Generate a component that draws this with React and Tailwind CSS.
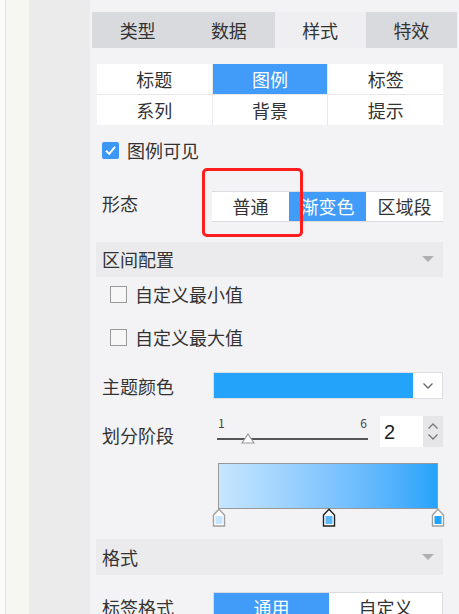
import React from 'react';

const font = { fontFamily: '"Noto Sans CJK SC", "Noto Sans", sans-serif' };

const Checkbox = ({ checked }) =>
  checked ? (
    <span className="flex h-[17px] w-[17px] items-center justify-center rounded-[2px] bg-[#3d97f5]">
      <svg width="13" height="13" viewBox="0 0 13 13">
        <path d="M2 6.8 L5.2 9.8 L11 2.8" fill="none" stroke="#fff" strokeWidth="2" />
      </svg>
    </span>
  ) : (
    <span className="h-[17px] w-[17px] border border-[#9a9a9a] bg-[#f7f7f7]" />
  );

const Caret = () => (
  <svg width="12" height="7" viewBox="0 0 12 7">
    <path d="M0 0 H12 L6 6 Z" fill="#b0b0b0" />
  </svg>
);

const Marker = ({ stroke, fill, left }) => (
  <svg
    className="absolute top-full"
    style={{ left }}
    width="14"
    height="19"
    viewBox="0 0 14 19"
  >
    <path d="M1.5 7 L7 1.2 L12.5 7 V18 H1.5 Z" fill="#fff" stroke={stroke} strokeWidth="1.4" />
    <rect x="3.5" y="8" width="7" height="8" fill={fill} />
  </svg>
);

export default function App() {
  const tabs = ['类型', '数据', '样式', '特效'];
  const subs = ['标题', '图例', '标签', '系列', '背景', '提示'];

  return (
    <div className="flex h-[614px] w-[459px] overflow-hidden text-[#333]" style={font}>
      <div className="w-[5px] bg-[#fbfbfb]" />
      <div className="w-[24px] border-l border-[#e2e2dc] bg-[#f7f7f2]" />
      <div className="w-[61px] bg-[#ebebeb]" />

      <div className="relative flex-1 bg-[#f3f3f6] pt-[12px]">
        {/* top tabs */}
        <div className="ml-[2px] grid h-[36px] w-[365px] grid-cols-4 text-[18px]">
          {tabs.map((t) => (
            <div
              key={t}
              className={`flex items-center justify-center ${
                t === '样式' ? 'bg-[#efeff2]' : 'bg-[#d9dadd]'
              }`}
            >
              {t}
            </div>
          ))}
        </div>

        {/* sub tabs */}
        <div className="ml-[7px] mt-[16px] grid w-[346px] grid-cols-3 gap-px bg-[#e9e9ec] text-[18px]">
          {subs.map((s) => (
            <div
              key={s}
              className={`flex h-[30px] items-center justify-center ${
                s === '图例' ? 'bg-[#409cf8] text-white' : 'bg-white'
              }`}
            >
              {s}
            </div>
          ))}
        </div>

        {/* legend visible */}
        <div className="ml-[12px] mt-[13px] flex h-[24px] items-center gap-[8px] text-[18px]">
          <Checkbox checked />
          <span>图例可见</span>
        </div>

        {/* shape */}
        <div className="mt-[29px] flex h-[31px] items-center text-[18px]">
          <span className="mb-[8px] ml-[12px] w-[110px] leading-[20px]">形态</span>
          <div className="flex h-[31px] w-[231px] border-y border-[#dcdce0] bg-white">
            <div className="flex w-[77px] items-center justify-center">普通</div>
            <div className="flex w-[77px] items-center justify-center bg-[#409cf8] text-white">渐变色</div>
            <div className="flex w-[77px] items-center justify-center">区域段</div>
          </div>
        </div>

        {/* highlight box */}
        <div className="absolute left-[112px] top-[168px] h-[69px] w-[101px] rounded-[5px] border-[3px] border-[#ff1e1e]" />

        {/* interval config */}
        <div className="ml-[6px] mt-[20px] flex h-[35px] w-[347px] items-center justify-between bg-[#ebebed] pl-[6px] pr-[9px] text-[18px]">
          <span>区间配置</span>
          <Caret />
        </div>

        <div className="ml-[20px] flex h-[34px] items-center gap-[8px] text-[18px]">
          <Checkbox />
          <span>自定义最小值</span>
        </div>
        <div className="ml-[20px] mt-[9px] flex h-[34px] items-center gap-[8px] text-[18px]">
          <Checkbox />
          <span>自定义最大值</span>
        </div>

        {/* theme colour */}
        <div className="mt-[18px] flex h-[27px] items-center text-[18px]">
          <span className="ml-[12px] w-[111px] leading-[20px]">主题颜色</span>
          <div className="flex h-[27px] w-[230px] border border-[#dedee2] bg-white">
            <div className="flex-1 bg-[#24a3fb]" />
            <div className="flex w-[29px] items-center justify-center">
              <svg width="12" height="8" viewBox="0 0 12 8">
                <path d="M1.5 1.5 L6 6 L10.5 1.5" fill="none" stroke="#666" strokeWidth="1.3" />
              </svg>
            </div>
          </div>
        </div>

        {/* stages */}
        <div className="mt-[17px] flex h-[31px] items-center text-[18px]">
          <span className="ml-[12px] mt-[6px] w-[115px] leading-[20px]">划分阶段</span>
          <div className="flex h-[31px] w-[151px] flex-col justify-between pb-[7px]">
            <div className="flex justify-between px-[1px] text-[12px] leading-[14px] text-[#444]">
              <span>1</span>
              <span>6</span>
            </div>
            <div className="relative h-[2px] bg-[#555]">
              <svg className="absolute left-[24px] top-[-5px]" width="14" height="11" viewBox="0 0 14 11">
                <path d="M7 1 L13 10 H1 Z" fill="#fff" stroke="#999" strokeWidth="1.2" />
              </svg>
            </div>
          </div>
          <div className="ml-[12px] flex h-[31px] w-[63px]">
            <div className="flex w-[43px] items-center bg-white pl-[4px] text-[20px] text-[#222]" style={{ fontFamily: '"Liberation Sans", Arial, sans-serif' }}>
              2
            </div>
            <div className="flex w-[20px] flex-col items-center justify-center gap-[3px] bg-[#e6e6e9]">
              <svg width="12" height="8" viewBox="0 0 12 8">
                <path d="M1.5 6.5 L6 2 L10.5 6.5" fill="none" stroke="#777" strokeWidth="1.3" />
              </svg>
              <svg width="12" height="8" viewBox="0 0 12 8">
                <path d="M1.5 1.5 L6 6 L10.5 1.5" fill="none" stroke="#777" strokeWidth="1.3" />
              </svg>
            </div>
          </div>
        </div>

        {/* gradient */}
        <div className="relative ml-[128px] mt-[16px] h-[46px] w-[220px] border border-[#999] bg-gradient-to-r from-[#c7e6fe] to-[#23a3fb]">
          <Marker stroke="#a0a0a0" fill="#c7e6fe" left={-7} />
          <Marker stroke="#222" fill="#5cb9fb" left={103} />
          <Marker stroke="#a0a0a0" fill="#23a3fb" left={212} />
        </div>

        {/* format */}
        <div className="ml-[6px] mt-[30px] flex h-[36px] w-[347px] items-center justify-between bg-[#ebebed] pl-[6px] pr-[9px] text-[18px]">
          <span>格式</span>
          <Caret />
        </div>

        <div className="mt-[17px] flex items-center text-[18px]">
          <span className="ml-[12px] w-[111px]">标签格式</span>
          <div className="flex h-[31px] w-[230px] border border-[#dcdce0] bg-white">
            <div className="flex w-[115px] items-center justify-center bg-[#409cf8] text-white">通用</div>
            <div className="flex flex-1 items-center justify-center">自定义</div>
          </div>
        </div>
      </div>
    </div>
  );
}
